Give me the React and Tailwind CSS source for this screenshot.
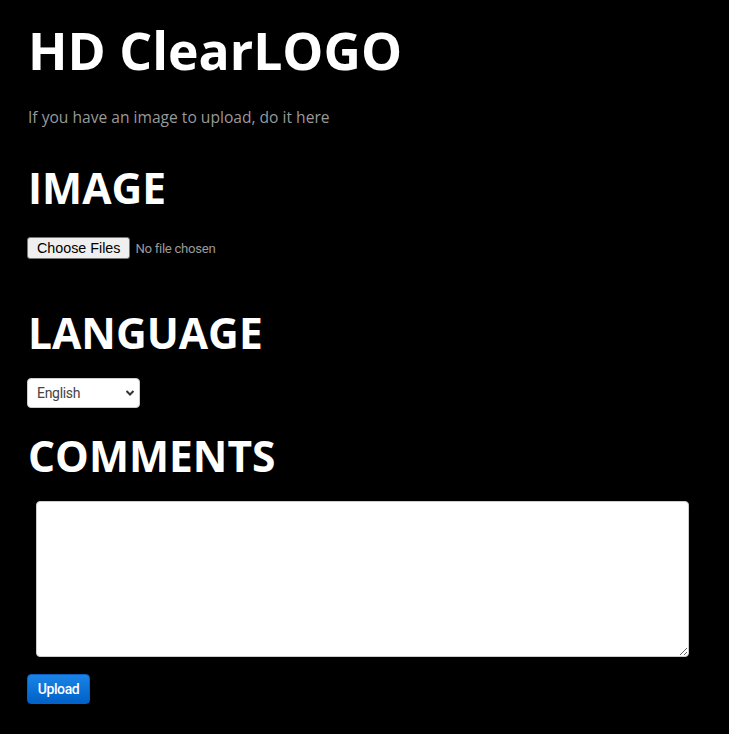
import React from "react";

const App = () => {
  return (
    <div className="min-h-screen bg-black pl-[28px] pr-[40px] pt-[19px] pb-[30px] font-['Open_Sans',sans-serif]">
      <h1 className="text-[51.7px] font-bold leading-[1.2] text-white">
        HD ClearLOGO
      </h1>
      <p className="mt-[25px] text-[15.6px] leading-[1.5] text-[#999999]">
        If you have an image to upload, do it here
      </p>

      <h2 className="mt-[33px] text-[42.5px] font-bold leading-[1.2] text-white">
        IMAGE
      </h2>
      <div className="mt-[24px] h-[22px]">
        <input
          type="file"
          multiple
          className="block -ml-[1px] h-[22px] text-[13.2px] font-['Roboto',sans-serif] tracking-[-0.3px] text-[#9a9a9a] file:mr-[5px] file:h-[22px] file:rounded-[3px] file:border file:border-[#767676] file:bg-[#efefef] file:px-[9px] file:font-['Liberation_Sans',sans-serif] file:text-[14.3px] file:tracking-normal file:text-black"
        />
      </div>

      <h2 className="mt-[48px] text-[42.5px] font-bold leading-[1.2] text-white">
        LANGUAGE
      </h2>
      <div className="relative mt-[20px] -ml-[1px] w-[113px]">
        <select className="h-[30px] w-full appearance-none rounded-[4px] border border-[#cccccc] bg-white pl-[9px] pr-[24px] font-['Roboto',sans-serif] text-[14px] tracking-[-0.3px] text-[#444444] outline-none">
          <option>English</option>
          <option>Español</option>
          <option>Français</option>
          <option>Deutsch</option>
        </select>
        <svg
          className="pointer-events-none absolute right-[5px] top-[11px]"
          width="10"
          height="8"
          viewBox="0 0 10 8"
        >
          <path
            d="M1.5 2 L5 5.5 L8.5 2"
            fill="none"
            stroke="#333333"
            strokeWidth="2"
          />
        </svg>
      </div>

      <h2 className="mt-[22px] text-[42.5px] font-bold leading-[1.2] text-white">
        COMMENTS
      </h2>
      <div className="mt-[20px] pl-[8px]">
        <textarea className="block h-[156px] w-[653px] rounded-[4px] border border-[#cccccc] bg-white p-2 font-['Liberation_Sans',sans-serif] text-[14px] text-black outline-none" />
      </div>

      <button className="mt-[17px] -ml-[1px] block h-[30px] w-[63px] rounded-[4px] border border-[#0a5fc0] bg-gradient-to-b from-[#1a84e6] to-[#0061c9] font-['Roboto',sans-serif] text-[14px] font-medium tracking-[-0.4px] text-white">
        Upload
      </button>
    </div>
  );
};

export default App;
